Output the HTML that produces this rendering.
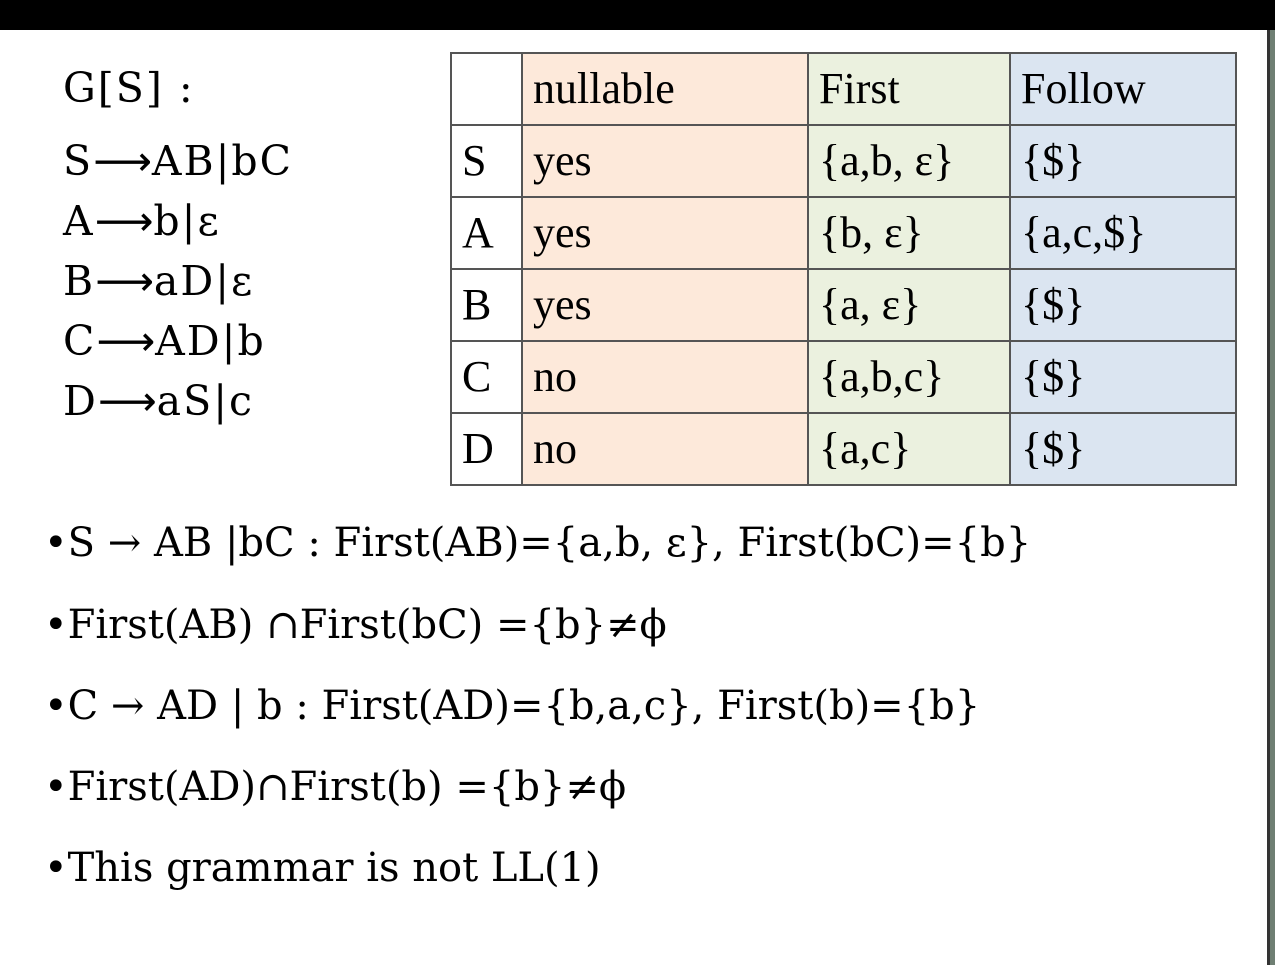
<!DOCTYPE html>
<html><head><meta charset="utf-8"><style>
body{margin:0;width:1275px;height:965px;background:#fff;position:relative;overflow:hidden;font-family:"Liberation Serif",serif;color:#000}
.top{position:absolute;left:0;top:0;width:1275px;height:30px;background:#000}
.rs{position:absolute;left:1267px;top:30px;width:8px;height:935px;background:#6f7f73}
.rs2{position:absolute;left:1267px;top:30px;width:3px;height:935px;background:#333}
.g{position:absolute;left:63px;font-family:"DejaVu Serif",serif;font-size:41px;letter-spacing:2px;line-height:1;white-space:nowrap}
.g span{font-family:"DejaVu Sans",sans-serif;letter-spacing:0}
table{position:absolute;left:450px;top:52px;border-collapse:collapse;font-size:44px}
td{border:2px solid #555;height:70px;padding:0 0 0 10px;vertical-align:middle;line-height:1}
.n{background:#fde9da}.f{background:#ebf1df}.w{background:#dbe5f1}
.b{position:absolute;left:44px;font-family:"DejaVu Serif",serif;font-size:40px;white-space:nowrap;line-height:1}
</style></head><body>
<div class="top"></div><div class="rs"></div><div class="rs2"></div>
<div class="g" style="top:68px">G[S] :</div>
<div class="g" style="top:141px">S<span>⟶</span>AB|bC</div>
<div class="g" style="top:201px">A<span>⟶</span>b|ε</div>
<div class="g" style="top:261px">B<span>⟶</span>aD|ε</div>
<div class="g" style="top:321px">C<span>⟶</span>AD|b</div>
<div class="g" style="top:381px">D<span>⟶</span>aS|c</div>
<table>
<tr><td style="width:59px"></td><td class="n" style="width:274px">nullable</td><td class="f" style="width:190px">First</td><td class="w" style="width:214px">Follow</td></tr>
<tr><td>S</td><td class="n">yes</td><td class="f">{a,b, ε}</td><td class="w">{$}</td></tr>
<tr><td>A</td><td class="n">yes</td><td class="f">{b, ε}</td><td class="w">{a,c,$}</td></tr>
<tr><td>B</td><td class="n">yes</td><td class="f">{a, ε}</td><td class="w">{$}</td></tr>
<tr><td>C</td><td class="n">no</td><td class="f">{a,b,c}</td><td class="w">{$}</td></tr>
<tr><td>D</td><td class="n">no</td><td class="f">{a,c}</td><td class="w">{$}</td></tr>
</table>
<div class="b" style="top:523px">•S → AB |bC : First(AB)={a,b, ε}, First(bC)={b}</div>
<div class="b" style="top:605px">•First(AB) ∩First(bC) ={b}≠ϕ</div>
<div class="b" style="top:686px">•C → AD | b : First(AD)={b,a,c}, First(b)={b}</div>
<div class="b" style="top:767px">•First(AD)∩First(b) ={b}≠ϕ</div>
<div class="b" style="top:848px">•This grammar is not LL(1)</div>
</body></html>
